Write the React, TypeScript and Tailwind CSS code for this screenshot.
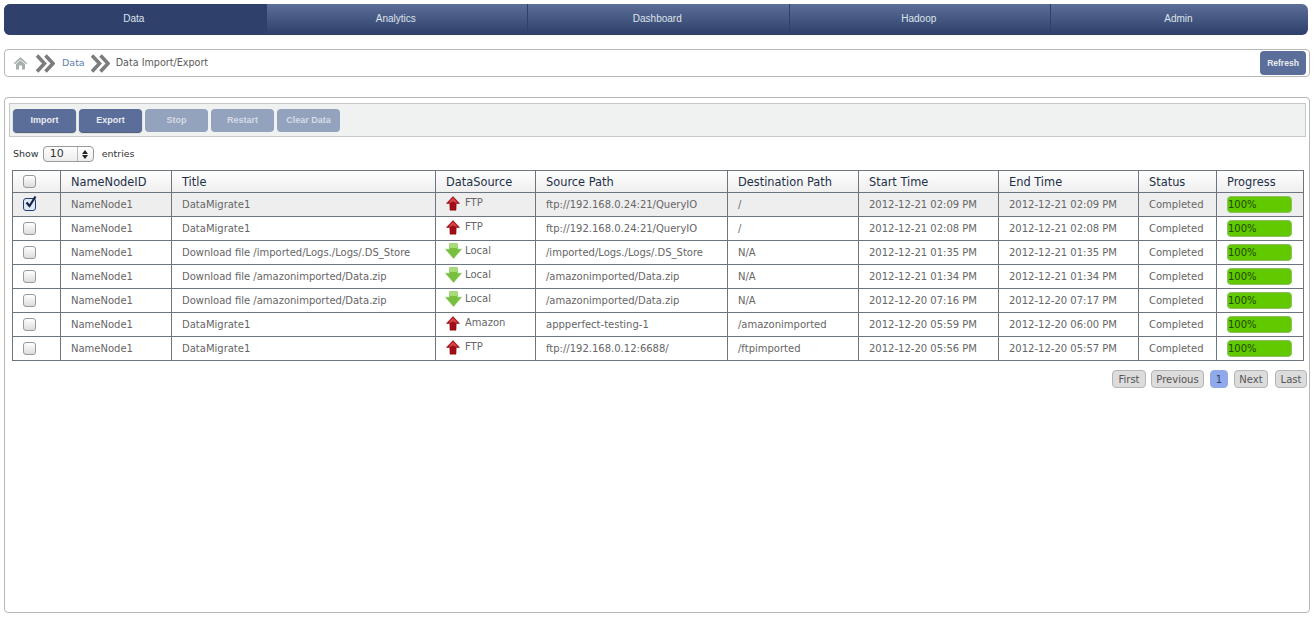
const tabs = ['Data', 'Analytics', 'Dashboard', 'Hadoop', 'Admin'];

const rows = [
  { title: 'DataMigrate1', dir: 'up', source: 'FTP', path: 'ftp://192.168.0.24:21/QueryIO', dest: '/', start: '2012-12-21 02:09 PM', end: '2012-12-21 02:09 PM', checked: true },
  { title: 'DataMigrate1', dir: 'up', source: 'FTP', path: 'ftp://192.168.0.24:21/QueryIO', dest: '/', start: '2012-12-21 02:08 PM', end: '2012-12-21 02:08 PM' },
  { title: 'Download file /imported/Logs./Logs/.DS_Store', dir: 'down', source: 'Local', path: '/imported/Logs./Logs/.DS_Store', dest: 'N/A', start: '2012-12-21 01:35 PM', end: '2012-12-21 01:35 PM' },
  { title: 'Download file /amazonimported/Data.zip', dir: 'down', source: 'Local', path: '/amazonimported/Data.zip', dest: 'N/A', start: '2012-12-21 01:34 PM', end: '2012-12-21 01:34 PM' },
  { title: 'Download file /amazonimported/Data.zip', dir: 'down', source: 'Local', path: '/amazonimported/Data.zip', dest: 'N/A', start: '2012-12-20 07:16 PM', end: '2012-12-20 07:17 PM' },
  { title: 'DataMigrate1', dir: 'up', source: 'Amazon', path: 'appperfect-testing-1', dest: '/amazonimported', start: '2012-12-20 05:59 PM', end: '2012-12-20 06:00 PM' },
  { title: 'DataMigrate1', dir: 'up', source: 'FTP', path: 'ftp://192.168.0.12:6688/', dest: '/ftpimported', start: '2012-12-20 05:56 PM', end: '2012-12-20 05:57 PM' },
];

const columns = [
  { label: 'NameNodeID', width: 'w-[111px]' },
  { label: 'Title', width: 'w-[264px]' },
  { label: 'DataSource', width: 'w-[100px]' },
  { label: 'Source Path', width: 'w-[192px]' },
  { label: 'Destination Path', width: 'w-[131px]' },
  { label: 'Start Time', width: 'w-[140px]' },
  { label: 'End Time', width: 'w-[140px]' },
  { label: 'Status', width: 'w-[78px]' },
  { label: 'Progress', width: 'w-[87px]' },
];

function UpArrow() {
  return (
    <svg width="14" height="15" viewBox="0 0 14 15" className="block">
      <path d="M7 .6 13.6 7.4 10.2 7.6 10 14.2 4 14.2 3.8 7.6 .4 7.4Z" fill="#a50d14" stroke="#7a0a10" strokeWidth=".5" />
      <path d="M7 1.8 11.4 6.4H8.6L7 5 5.4 6.4H2.6Z" fill="#d8474c" />
    </svg>
  );
}

function DownArrow() {
  return (
    <svg width="17" height="16" viewBox="0 0 17 16" className="block ml-[-1px]">
      <path d="M4.6 .5H12.4L12.6 6.2H16.6L8.5 15.6 .4 6.2H4.4Z" fill="#79bf3f" stroke="#8ac95a" strokeWidth=".5" />
      <path d="M5 1H12V5H5Z" fill="#a8dc76" />
    </svg>
  );
}

function Chevrons() {
  return (
    <svg width="19" height="19" viewBox="0 0 19 19" className="shrink-0">
      <path d="M1 1.5 8.5 9.5 1 17.5M9.5 1.5 17 9.5 9.5 17.5" fill="none" stroke="#7c7c7c" strokeWidth="3.6" />
    </svg>
  );
}

function Checkbox({ checked }: { checked?: boolean }) {
  if (checked) {
    return (
      <span className="relative block w-[13px] h-[13px] rounded-[3px] border border-[#20407a] bg-[#dfe8f6]">
        <svg width="16" height="16" viewBox="0 0 16 16" className="absolute left-[-1px] top-[-5px]">
          <path d="M3.5 8.5 6.5 12 12.5 2.5" fill="none" stroke="#14233f" strokeWidth="2.2" />
        </svg>
      </span>
    );
  }
  return <span className="block w-[13px] h-[13px] rounded-[3px] border border-[#9a9a9a] bg-gradient-to-b from-[#ffffff] to-[#dcdcdc]" />;
}

function ActionButton({ label, disabled }: { label: string; disabled?: boolean }) {
  return (
    <button
      className={
        "w-[63px] h-[23px] rounded-[4px] text-[9px] font-bold text-center pt-[2px] font-['Liberation_Sans',sans-serif] " +
        (disabled ? 'bg-[#93a2bd] text-[#d5dbe6]' : 'bg-[#5a6e99] text-[#e8ebf2] shadow-[0_1px_1px_#44506a]')
      }
    >
      {label}
    </button>
  );
}

function PageButton({ label, active, width }: { label: string; active?: boolean; width: string }) {
  return (
    <span
      className={
        'h-[18px] flex items-center justify-center rounded-[4px] border text-[10px] ' +
        width +
        (active ? ' bg-[#8fa9ea] border-[#8fa9ea] text-[#2d3e66]' : ' bg-[#dcdcdc] border-[#b4b4b4] text-[#555555]')
      }
    >
      {label}
    </span>
  );
}

export default function App() {
  return (
    <div className="w-[1316px] h-[628px] bg-white pt-1 pl-1 overflow-hidden font-['DejaVu_Sans',sans-serif]">
      {/* top nav */}
      <nav className="w-[1304px] h-[31px] flex rounded-[6px] overflow-hidden bg-gradient-to-b from-[#5c6f98] to-[#2e4069] font-['Liberation_Sans',sans-serif] text-[10px] text-[#dfe3ec]">
        {tabs.map((tab, i) => (
          <div
            key={tab}
            className={
              'flex items-center justify-center pb-[3px] pr-[2px] ' +
              (i === 4 ? 'flex-1' : 'w-[261.5px]') +
              (i === 0 ? ' bg-[#2f406b]' : ' border-l border-[#2f406b]')
            }
          >
            {tab}
          </div>
        ))}
      </nav>

      {/* breadcrumb */}
      <div className="w-[1306px] h-[28px] mt-[14px] flex items-center rounded-[4px] border border-[#b8b8b8] pl-[8px] pr-[3px] text-[10px]">
        <svg width="15" height="14" viewBox="0 0 15 14" className="shrink-0">
          <path d="M7.5 1 14.5 7.5 13 8 7.5 3.5 2 8 .5 7.5Z" fill="#a9aeae" />
          <path d="M3 8 7.5 4.2 12 8V13.5H9V9.5H6V13.5H3Z" fill="#a9aeae" />
        </svg>
        <span className="ml-[8px]"><Chevrons /></span>
        <span className="ml-[7px] text-[9.5px] text-[#5c7dab]">Data</span>
        <span className="ml-[6px]"><Chevrons /></span>
        <span className="ml-[6px] text-[9.6px] text-[#5b5b5b]">Data Import/Export</span>
        <button className="ml-auto w-[46px] h-[24px] rounded-[4px] bg-[#5a6e99] text-[8.5px] font-bold text-[#e8ebf2] font-['Liberation_Sans',sans-serif]">Refresh</button>
      </div>

      {/* main panel */}
      <div className="w-[1306px] h-[516px] mt-[20px] rounded-[4px] border border-[#b8b8b8] px-[4px] pt-[5px]">
        <div className="w-[1297px] h-[34px] flex items-center gap-[3px] bg-[#f0f2f1] border border-[#c4c8c8] pl-[3px]">
          <ActionButton label="Import" />
          <ActionButton label="Export" />
          <ActionButton label="Stop" disabled />
          <ActionButton label="Restart" disabled />
          <ActionButton label="Clear Data" disabled />
        </div>

        <div className="h-[33px] flex items-center pl-[4px] pt-[1px] text-[9.5px] text-[#333333]">
          Show
          <span className="ml-[4px] w-[51px] h-[16px] flex items-center rounded-[4px] border border-[#9a9a9a] bg-gradient-to-b from-[#ffffff] to-[#ececec] text-[11px]">
            <span className="flex-1 pl-[6px]">10</span>
            <span className="w-[16px] h-full flex flex-col items-center justify-center gap-[1px] border-l border-[#bbbbbb]">
              <span className="w-0 h-0 border-x-[3px] border-x-transparent border-b-[4px] border-b-[#222222]" />
              <span className="w-0 h-0 border-x-[3px] border-x-transparent border-t-[4px] border-t-[#222222]" />
            </span>
          </span>
          <span className="ml-[8px]">entries</span>
        </div>

        <table className="w-[1291px] ml-[3px] table-fixed border-collapse border border-[#6d7680] text-[10px] text-[#666666]">
          <thead>
            <tr className="h-[22px] bg-gradient-to-b from-[#ffffff] to-[#eeeeee]">
              <th className="w-[48px] border border-[#6d7680] font-normal pl-[10px]">
                <Checkbox />
              </th>
              {columns.map((col) => (
                <th key={col.label} className={col.width + ' border border-[#6d7680] px-[10px] pt-[2px] text-left text-[11.4px] font-normal text-[#1e3048]'}>
                  {col.label}
                </th>
              ))}
            </tr>
          </thead>
          <tbody>
            {rows.map((row, i) => (
              <tr key={i} className={'h-[24px] ' + (row.checked ? 'bg-[#eeeeee]' : 'bg-white')}>
                <td className="border border-[#6d7680] pl-[10px]">
                  <Checkbox checked={row.checked} />
                </td>
                <td className="border border-[#6d7680] px-[10px]">NameNode1</td>
                <td className="border border-[#6d7680] px-[10px] whitespace-nowrap">{row.title}</td>
                <td className="border border-[#6d7680] pl-[10px]">
                  <span className="flex items-center">
                    <span className="w-[19px] mb-[3px]">{row.dir === 'up' ? <UpArrow /> : <DownArrow />}</span>
                    <span className="mb-[5px]">{row.source}</span>
                  </span>
                </td>
                <td className="border border-[#6d7680] px-[10px] whitespace-nowrap">{row.path}</td>
                <td className="border border-[#6d7680] px-[10px]">{row.dest}</td>
                <td className="border border-[#6d7680] px-[10px] whitespace-nowrap">{row.start}</td>
                <td className="border border-[#6d7680] px-[10px] whitespace-nowrap">{row.end}</td>
                <td className="border border-[#6d7680] px-[10px]">Completed</td>
                <td className="border border-[#6d7680] pl-[10px]">
                  <div className="w-[65px] h-[17px] flex items-center rounded-[4px] border border-[#8fbf60] bg-[#62c800] text-[10px] text-[#1d4a00]">100%</div>
                </td>
              </tr>
            ))}
          </tbody>
        </table>

        <div className="w-[1298px] flex justify-end mt-[9px]">
          <PageButton label="First" width="w-[34px]" />
          <span className="ml-[5px]"><PageButton label="Previous" width="w-[53px]" /></span>
          <span className="ml-[6px]"><PageButton label="1" active width="w-[18px]" /></span>
          <span className="ml-[6px]"><PageButton label="Next" width="w-[34px]" /></span>
          <span className="ml-[7px]"><PageButton label="Last" width="w-[32px]" /></span>
        </div>
      </div>
    </div>
  );
}
